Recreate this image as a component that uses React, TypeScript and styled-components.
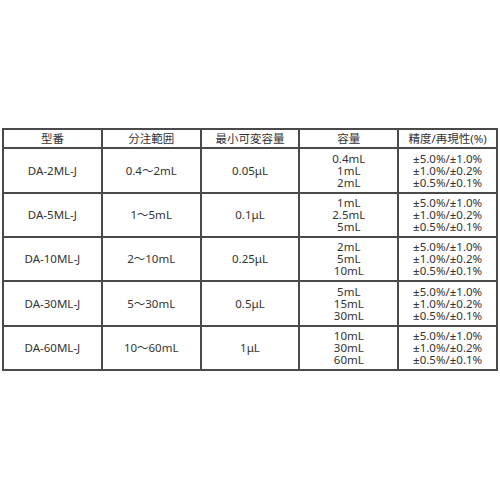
import styled, { createGlobalStyle } from "styled-components";

const Global = createGlobalStyle`
  body {
    margin: 0;
    background: #fff;
    font-family: "Noto Sans", "Noto Sans CJK JP", sans-serif;
    color: #333;
  }
`;

const Page = styled.div`
  width: 500px;
  height: 500px;
  padding: 128px 0 0 2px;
  box-sizing: border-box;
`;

const Table = styled.table`
  width: 496px;
  border-collapse: collapse;
  table-layout: fixed;
  font-size: 11.5px;
  line-height: 12px;
`;

const Head = styled.th`
  height: 17px;
  padding: 0;
  border: 2px solid #4a4a4a;
  font-weight: normal;
  text-align: center;
  vertical-align: middle;
`;

const Cell = styled.td<{ tall?: boolean }>`
  height: ${(p) => (p.tall ? 43 : 42)}px;
  padding: 0;
  border: 2px solid #4a4a4a;
  text-align: center;
  vertical-align: middle;
`;

const Line = styled.div`
  white-space: nowrap;
`;

const rows = [
  { model: "DA-2ML-J", range: "0.4～2mL", min: "0.05μL", vols: ["0.4mL", "1mL", "2mL"], tall: true },
  { model: "DA-5ML-J", range: "1～5mL", min: "0.1μL", vols: ["1mL", "2.5mL", "5mL"], tall: false },
  { model: "DA-10ML-J", range: "2～10mL", min: "0.25μL", vols: ["2mL", "5mL", "10mL"], tall: false },
  { model: "DA-30ML-J", range: "5～30mL", min: "0.5μL", vols: ["5mL", "15mL", "30mL"], tall: true },
  { model: "DA-60ML-J", range: "10～60mL", min: "1μL", vols: ["10mL", "30mL", "60mL"], tall: false },
];

const accuracy = ["±5.0%/±1.0%", "±1.0%/±0.2%", "±0.5%/±0.1%"];

const App = () => {
  return (
    <Page>
      <Global />
      <Table>
        <thead>
          <tr>
            <Head>型番</Head>
            <Head>分注範囲</Head>
            <Head>最小可変容量</Head>
            <Head>容量</Head>
            <Head>精度/再現性(%)</Head>
          </tr>
        </thead>
        <tbody>
          {rows.map((r) => (
            <tr key={r.model}>
              <Cell tall={r.tall}>{r.model}</Cell>
              <Cell tall={r.tall}>{r.range}</Cell>
              <Cell tall={r.tall}>{r.min}</Cell>
              <Cell tall={r.tall}>
                {r.vols.map((v) => (
                  <Line key={v}>{v}</Line>
                ))}
              </Cell>
              <Cell tall={r.tall}>
                {accuracy.map((a) => (
                  <Line key={a}>{a}</Line>
                ))}
              </Cell>
            </tr>
          ))}
        </tbody>
      </Table>
    </Page>
  );
};

export default App;
